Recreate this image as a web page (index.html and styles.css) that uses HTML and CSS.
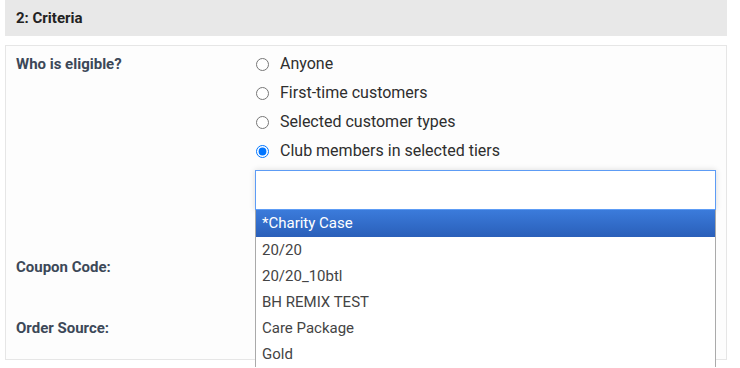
FILE: index.html
```html
<!DOCTYPE html>
<html>
<head>
<meta charset="utf-8">
<link rel="stylesheet" href="styles.css">
</head>
<body>
<div class="section-head">2: Criteria</div>
<div class="panel">
  <div class="row row-eligible">
    <div class="label">Who is eligible?</div>
    <div class="field">
      <label class="opt"><input type="radio" name="who"><span>Anyone</span></label>
      <label class="opt"><input type="radio" name="who"><span>First-time customers</span></label>
      <label class="opt"><input type="radio" name="who"><span>Selected customer types</span></label>
      <label class="opt"><input type="radio" name="who" checked><span>Club members in selected tiers</span></label>
      <div class="picker">
        <div class="picker-box"></div>
        <ul class="picker-list">
          <li class="active">*Charity Case</li>
          <li>20/20</li>
          <li>20/20_10btl</li>
          <li>BH REMIX TEST</li>
          <li>Care Package</li>
          <li>Gold</li>
        </ul>
      </div>
    </div>
  </div>
  <div class="row row-coupon">
    <div class="label">Coupon Code:</div>
    <div class="field"></div>
  </div>
  <div class="row row-source">
    <div class="label">Order Source:</div>
    <div class="field"></div>
  </div>
</div>
</body>
</html>
```
FILE: styles.css
```css
html, body {
  margin: 0;
  padding: 0;
  background: #ffffff;
  font-family: Roboto, "Noto Sans", sans-serif;
  overflow: hidden;
  height: 368px;
}
.section-head {
  margin: 0 13px 0 5px;
  height: 36px;
  line-height: 36px;
  padding-left: 11px;
  background: #e8e8e8;
  font-weight: 700;
  font-size: 15px;
  color: #222;
}
.panel {
  margin: 9px 13px 0 5px;
  border: 1px solid #e6e6e6;
  background: #fdfdfd;
  padding: 4px 0 16px 10px;
}
.row {
  display: grid;
  grid-template-columns: 239px 461px;
}
.label {
  font-weight: 700;
  font-size: 15px;
  line-height: 29px;
  color: #3c4858;
}
.row-coupon {
  margin-top: 43px;
  height: 61px;
}
.row-source {
  height: 29px;
}
.field {
  display: flex;
  flex-direction: column;
}
.opt {
  display: flex;
  align-items: center;
  height: 29px;
  font-size: 16px;
  color: #2e2e2e;
}
.opt span {
  position: relative;
  top: -1px;
}
.opt input {
  margin: 0 11px 0 1px;
  width: 13px;
  height: 13px;
}
.picker {
  position: relative;
  margin-top: 4px;
}
.picker-box {
  height: 38px;
  border: 1px solid #5d9cf5;
  background: #fff;
  box-shadow: 0 0 6px rgba(0, 0, 0, 0.14);
}
.picker-list {
  position: absolute;
  top: 100%;
  left: 0;
  right: 0;
  margin: 0;
  padding: 0;
  list-style: none;
  background: #fff;
  border-left: 1px solid #aaa;
  border-right: 1px solid #aaa;
  z-index: 2;
}
.picker-list li {
  height: 26px;
  line-height: 26px;
  padding-left: 6px;
  font-size: 15px;
  color: #444;
}
.picker-list li.active {
  height: 27px;
  line-height: 27px;
  color: #fff;
  background: linear-gradient(#3b7bdb, #2a5fb9);
}
```
